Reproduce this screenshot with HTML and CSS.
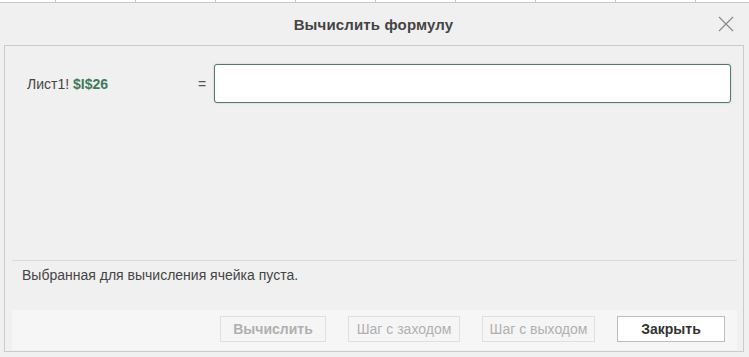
FILE: index.html
```html
<!DOCTYPE html>
<html>

<head>
	<meta charset="utf-8" />
	<title>Вычислить формулу</title>
	<meta name="viewport" content="width=device-width, initial-scale=1" />
	<link rel="stylesheet" href="styles.css">
</head>

<body>
	<div class="sheet-head">
		<span></span><span></span><span></span><span></span><span></span>
		<span></span><span></span><span></span><span></span>
	</div>
	<div class="dialog">
		<header class="dialog-head">
			<h1 class="dialog-title">Вычислить формулу</h1>
			<button class="close" aria-label="Закрыть">
				<svg width="16" height="16" viewBox="0 0 16 16">
					<path d="M1 1 L15 15 M15 1 L1 15" stroke="#8a8a8a" stroke-width="1.2" fill="none" />
				</svg>
			</button>
		</header>
		<section class="panel">
			<div class="formula">
				<div class="ref">Лист1! <b>$I$26</b></div>
				<div class="eq">=</div>
				<div class="value"></div>
			</div>
			<div class="status">Выбранная для вычисления ячейка пуста.</div>
			<div class="buttons">
				<button class="btn bold calc" disabled>Вычислить</button>
				<button class="btn step-in" disabled>Шаг с заходом</button>
				<button class="btn step-out" disabled>Шаг с выходом</button>
				<button class="btn bold primary">Закрыть</button>
			</div>
		</section>
	</div>
</body>

</html>
```

FILE: styles.css
```css
* {
	box-sizing: border-box;
}

body {
	margin: 0;
	background: #ffffff;
	font-family: "Liberation Sans", Arial, sans-serif;
	color: #444444;
	overflow: hidden;
}

/* strip of the spreadsheet header showing above the dialog */
.sheet-head {
	display: flex;
	height: 2px;
	padding-left: 55px;
	overflow: hidden;
}

.sheet-head span {
	width: 80px;
	flex: none;
	border-left: 1px solid #c8c8c8;
}

.dialog {
	height: 355px;
	background: #f0f0f0;
	border-top: 1px solid #c8c8c8;
	display: flex;
	flex-direction: column;
}

.dialog-head {
	position: relative;
	height: 42px;
	display: flex;
	align-items: center;
	justify-content: center;
}

.dialog-title {
	margin: 0 0 0 -2px;
	font-size: 15px;
	font-weight: bold;
	color: #444444;
	letter-spacing: 0.15px;
}

.close {
	position: absolute;
	right: 15px;
	top: 13px;
	padding: 0;
	border: 0;
	background: none;
	width: 16px;
	height: 16px;
}

.close svg {
	display: block;
}

.panel {
	margin: 0 5px 5px 4px;
	height: 307px;
	border: 1px solid #cbcbcb;
	display: flex;
	flex-direction: column;
}

.formula {
	display: flex;
	align-items: center;
	padding: 18px 12px 0 22px;
	font-size: 14px;
}

.ref {
	width: 171px;
	color: #444444;
}

.ref b {
	color: #3f7a5a;
}

.eq {
	width: 16px;
	color: #555555;
}

.value {
	flex: 1;
	height: 39px;
	background: #ffffff;
	border: 1px solid #557a66;
	border-radius: 3px;
	box-shadow: 0 0 2px rgba(85, 122, 102, 0.35);
}

.status {
	margin: auto 6px 0 7px;
	height: 50px;
	border-top: 1px solid #dadada;
	padding: 5px 10px 0;
	font-size: 14px;
	line-height: 19px;
	color: #444444;
}

.buttons {
	margin: 0 6px 1px 7px;
	height: 40px;
	background: #f6f6f6;
	display: flex;
	justify-content: flex-end;
	align-items: flex-start;
	gap: 22px;
	padding: 6px 12px 0;
}

.btn {
	height: 26px;
	padding: 0;
	font-family: "Liberation Sans", Arial, sans-serif;
	font-size: 14px;
	color: #b0b0b0;
	background: #f5f5f5;
	border: 1px solid #e0e0e0;
}

.btn.bold {
	font-weight: bold;
}

.calc {
	width: 106px;
}

.step-in {
	width: 112px;
}

.step-out {
	width: 113px;
}

.btn.primary {
	width: 108px;
	color: #333333;
	background: #ffffff;
	border-color: #bdbdbd;
}
```
